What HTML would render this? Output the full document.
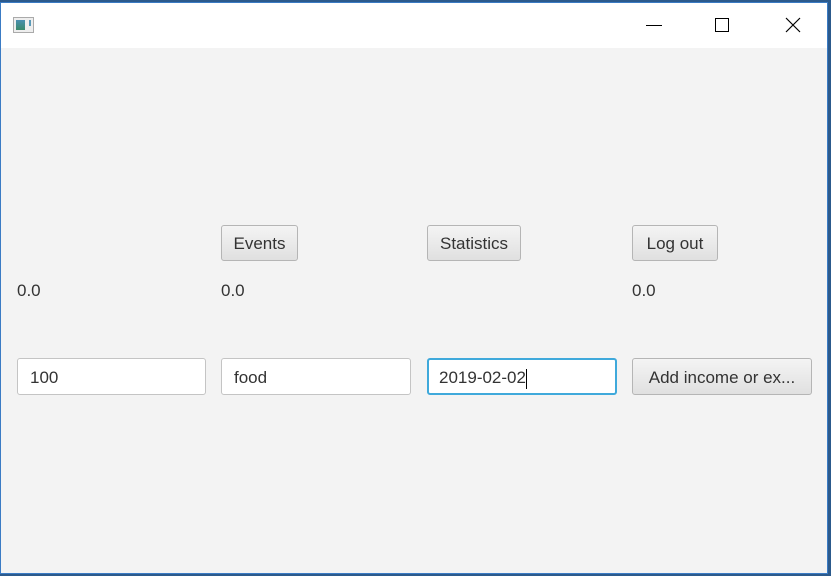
<!DOCTYPE html>
<html><head><style>
body{margin:0;width:831px;height:576px;overflow:hidden;background:#2c5a8c;font-family:"Liberation Sans",sans-serif;position:relative}
.win{position:absolute;left:0;top:2px;width:828px;height:572px;border:1px solid #3a7bc4;box-sizing:border-box;background:#f3f3f3}
.title{position:absolute;left:0;top:0;right:0;height:45px;background:#fff}
.a{position:absolute}
.btn{position:absolute;box-sizing:border-box;border:1px solid #b5b5b5;border-radius:3px;background:linear-gradient(#f4f4f4,#e0e0e0);font-size:17px;color:#333;text-align:center;line-height:36px;height:36px}
.tf{position:absolute;box-sizing:border-box;border:1px solid #c4c4c4;border-radius:3px;background:#fff;font-size:17px;color:#333;line-height:37px;height:37px;padding-left:12px}
.lb{position:absolute;font-size:17px;color:#333;top:281px}
</style></head><body>
<div class="win">
<div class="title">
<div class="a" style="left:12px;top:14px;width:21px;height:16px;border:1px solid #aaa;background:#eee;box-sizing:border-box"><div class="a" style="left:2px;top:2px;width:9px;height:10px;background:linear-gradient(#4a8fb0,#3a8a6a)"></div><div class="a" style="left:15px;top:2px;width:2px;height:6px;background:#5a9ab8"></div></div>
<div class="a" style="left:645px;top:22px;width:16px;height:1px;background:#000"></div>
<div class="a" style="left:714px;top:15px;width:14px;height:14px;border:1px solid #000;box-sizing:border-box"></div>
<svg class="a" style="left:784px;top:14px" width="16" height="16"><path d="M1 1L15 15M15 1L1 15" stroke="#000" stroke-width="1.2"/></svg>
</div>
</div>
<div class="btn" style="left:221px;top:225px;width:77px">Events</div>
<div class="btn" style="left:427px;top:225px;width:94px">Statistics</div>
<div class="btn" style="left:632px;top:225px;width:86px">Log out</div>
<div class="lb" style="left:17px">0.0</div>
<div class="lb" style="left:221px">0.0</div>
<div class="lb" style="left:632px">0.0</div>
<div class="tf" style="left:17px;top:358px;width:189px">100</div>
<div class="tf" style="left:221px;top:358px;width:190px">food</div>
<div class="tf" style="left:427px;top:358px;width:190px;border:2px solid #3fa9db;padding-left:10px;line-height:35px">2019-02-02<span style="display:inline-block;width:1px;height:20px;background:#000;vertical-align:middle"></span></div>
<div class="btn" style="left:632px;top:358px;width:180px;height:37px;line-height:37px">Add income or ex...</div>
</body></html>
